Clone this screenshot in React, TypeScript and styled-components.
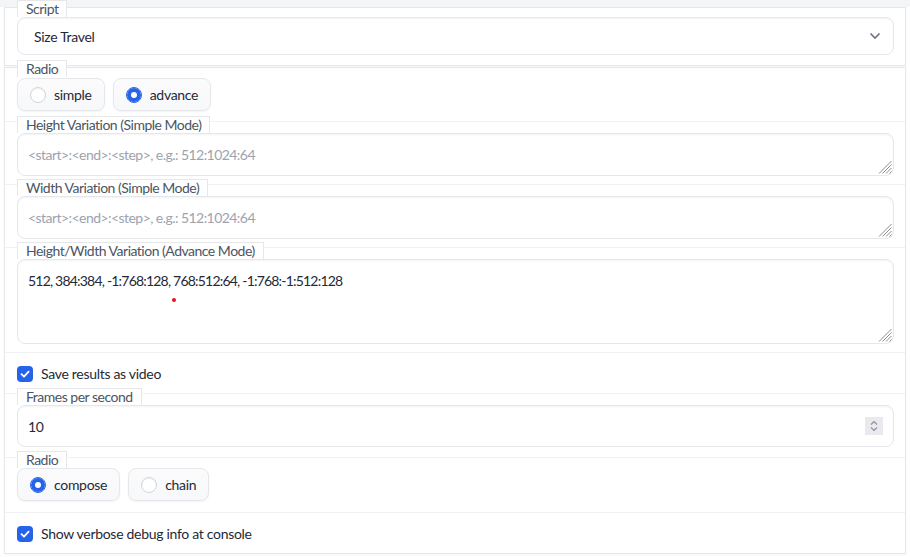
import React from "react";
import styled, { createGlobalStyle } from "styled-components";

const Global = createGlobalStyle`
  html, body { margin: 0; padding: 0; }
  body {
    background: linear-gradient(#f4f5f7 0 7px, #ffffff 7px);
    font-family: Lato, "Noto Sans", sans-serif;
    font-size: 14px;
    letter-spacing: -0.3px;
    color: #1f2937;
  }
  * { box-sizing: border-box; }
`;

const Page = styled.div`
  width: 910px;
  height: 557px;
  padding: 7px 4px 0 4px;
  display: flex;
  flex-direction: column;
`;

const Panel = styled.div<{ $gap?: number }>`
  width: 902px;
  margin-top: ${(p) => p.$gap ?? 0}px;
  background: #fff;
  border: 1px solid #e5e7eb;
  box-shadow: 0 1px 2px rgba(0, 0, 0, 0.04);
  display: flex;
  flex-direction: column;
`;

const Row = styled.div<{ $sep?: boolean; $pb?: number; $pt?: number }>`
  padding: ${(p) => p.$pt ?? 0}px 11px ${(p) => p.$pb ?? 8}px 12px;
  border-top: ${(p) => (p.$sep ? "1px solid #f1f2f4" : "none")};
  display: flex;
  flex-direction: column;
  align-items: flex-start;
`;

const Label = styled.span<{ $top?: number }>`
  margin-top: ${(p) => p.$top ?? -6}px;
  height: 17px;
  padding: 0 8px;
  border: 1px solid #e5e7eb;
  border-bottom: none;
  background: #fff;
  color: #4b5563;
  font-size: 14px;
  letter-spacing: -0.5px;
  line-height: 16px;
  white-space: nowrap;
`;

const Field = styled.div`
  position: relative;
  width: 100%;
`;

const SelectBox = styled.div`
  width: 100%;
  height: 38px;
  border: 1px solid #e5e7eb;
  border-radius: 8px;
  box-shadow: 0 1px 2px rgba(0, 0, 0, 0.05) inset;
  display: flex;
  align-items: center;
  justify-content: space-between;
  padding: 0 12px 0 16px;
  color: #1f2937;
  font-size: 14px;
`;

const TextArea = styled.textarea<{ $h: number }>`
  display: block;
  width: 100%;
  height: ${(p) => p.$h}px;
  border: 1px solid #e5e7eb;
  border-radius: 8px;
  box-shadow: 0 1px 2px rgba(0, 0, 0, 0.05) inset;
  padding: 11px 10px 10px;
  font-family: Lato, "Noto Sans", sans-serif;
  font-size: 14px;
  line-height: 20px;
  letter-spacing: -0.8px;
  color: #1f2937;
  background: #fff;
  outline: none;
  resize: none;
  &::placeholder { color: #9ca3af; letter-spacing: -0.55px; }
`;

const Grip = styled.svg`
  position: absolute;
  right: 2px;
  bottom: 2px;
  pointer-events: none;
`;

const NumberBox = styled.div`
  width: 100%;
  height: 42px;
  border: 1px solid #e5e7eb;
  border-radius: 8px;
  box-shadow: 0 1px 2px rgba(0, 0, 0, 0.05) inset;
  display: flex;
  align-items: center;
  justify-content: space-between;
  padding: 0 10px 0 10px;
  font-size: 14px;
  color: #1f2937;
`;

const Spinner = styled.div`
  width: 18px;
  height: 18px;
  background: #e9e9ee;
  display: flex;
  align-items: center;
  justify-content: center;
`;

const RadioGroup = styled.div<{ $mt?: number }>`
  display: flex;
  gap: 8px;
  margin-top: ${(p) => p.$mt ?? 1}px;
`;

const RadioItem = styled.label`
  height: 33px;
  display: flex;
  align-items: center;
  gap: 8px;
  padding: 0 12px 0 12px;
  border: 1px solid #e5e7eb;
  border-radius: 8px;
  background: linear-gradient(#fbfbfc, #f7f8fa);
  box-shadow: 0 1px 2px rgba(0, 0, 0, 0.05);
  font-size: 14px;
  color: #1f2937;
`;

const RadioDot = styled.span<{ $on?: boolean }>`
  width: 16px;
  height: 16px;
  border-radius: 50%;
  flex: none;
  background: #fff;
  border: 1px solid ${(p) => (p.$on ? "#2563eb" : "#d1d5db")};
  box-shadow: ${(p) => (p.$on ? "inset 0 0 0 4px #2563eb" : "0 1px 1px rgba(0,0,0,0.06) inset")};
`;

const CheckRow = styled.label`
  display: flex;
  align-items: center;
  gap: 8px;
  font-size: 14px;
  color: #1f2937;
`;

const CheckBox = styled.span`
  width: 16px;
  height: 16px;
  border-radius: 4px;
  background: #2563eb;
  display: flex;
  align-items: center;
  justify-content: center;
`;

const RedDot = styled.span`
  position: absolute;
  left: 155px;
  top: 39px;
  width: 4px;
  height: 4px;
  border-radius: 50%;
  background: #ee1111;
`;

const Chevron = () => (
  <svg width="12" height="8" viewBox="0 0 12 8">
    <path d="M1.5 1.5 L6 6 L10.5 1.5" fill="none" stroke="#6b7280" strokeWidth="1.6" />
  </svg>
);

const SpinIcon = () => (
  <svg width="10" height="14" viewBox="0 0 10 14">
    <path d="M2 5.5 L5 2.5 L8 5.5" fill="none" stroke="#8b8f99" strokeWidth="1.1" />
    <path d="M2 8.5 L5 11.5 L8 8.5" fill="none" stroke="#8b8f99" strokeWidth="1.1" />
  </svg>
);

const Check = () => (
  <svg width="12" height="12" viewBox="0 0 12 12">
    <path d="M2.5 6.2 L5 8.6 L9.6 3.6" fill="none" stroke="#fff" strokeWidth="1.8" strokeLinecap="round" strokeLinejoin="round" />
  </svg>
);

const ResizeGrip = () => (
  <Grip width="14" height="14" viewBox="0 0 14 14">
    <g stroke="#8a8a8a" strokeWidth="1">
      <line x1="13.5" y1="1" x2="1" y2="13.5" />
      <line x1="13.5" y1="4.5" x2="4.5" y2="13.5" />
      <line x1="13.5" y1="8" x2="8" y2="13.5" />
      <line x1="13.5" y1="11.5" x2="11.5" y2="13.5" />
    </g>
  </Grip>
);

const placeholder = "<start>:<end>:<step>, e.g.: 512:1024:64";

export default function App() {
  return (
    <>
      <Global />
      <Page>
        <Panel>
          <Row $pb={10}>
            <Label $top={-8}>Script</Label>
            <SelectBox>
              <span>Size Travel</span>
              <Chevron />
            </SelectBox>
          </Row>
        </Panel>
        <Panel $gap={1}>
          <Row $pb={10}>
            <Label $top={-8}>Radio</Label>
            <RadioGroup>
              <RadioItem><RadioDot />simple</RadioItem>
              <RadioItem><RadioDot $on />advance</RadioItem>
            </RadioGroup>
          </Row>
          <Row $sep>
            <Label>Height Variation (Simple Mode)</Label>
            <Field>
              <TextArea $h={43} placeholder={placeholder} />
              <ResizeGrip />
            </Field>
          </Row>
          <Row $sep>
            <Label>Width Variation (Simple Mode)</Label>
            <Field>
              <TextArea $h={43} placeholder={placeholder} />
              <ResizeGrip />
            </Field>
          </Row>
          <Row $sep $pb={8}>
            <Label>Height/Width Variation (Advance Mode)</Label>
            <Field>
              <TextArea $h={85} defaultValue="512, 384:384, -1:768:128, 768:512:64, -1:768:-1:512:128" />
              <ResizeGrip />
              <RedDot />
            </Field>
          </Row>
          <Row $sep $pt={12} $pb={11}>
            <CheckRow><CheckBox><Check /></CheckBox>Save results as video</CheckRow>
          </Row>
          <Row $sep $pb={10}>
            <Label>Frames per second</Label>
            <NumberBox>
              <span>10</span>
              <Spinner><SpinIcon /></Spinner>
            </NumberBox>
          </Row>
          <Row $sep $pb={11}>
            <Label $top={-7}>Radio</Label>
            <RadioGroup $mt={0}>
              <RadioItem><RadioDot $on />compose</RadioItem>
              <RadioItem><RadioDot />chain</RadioItem>
            </RadioGroup>
          </Row>
          <Row $sep $pt={12} $pb={11}>
            <CheckRow><CheckBox><Check /></CheckBox>Show verbose debug info at console</CheckRow>
          </Row>
        </Panel>
      </Page>
    </>
  );
}
